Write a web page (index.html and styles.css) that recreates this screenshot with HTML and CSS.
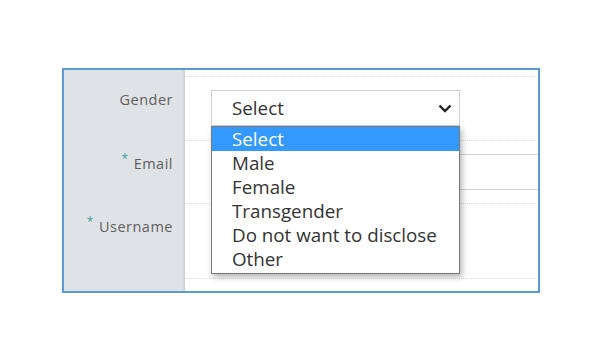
FILE: index.html
```html
<!DOCTYPE html>
<html lang="en">
<head>
    <meta charset="UTF-8">
    <title>Profile form</title>
    <link rel="stylesheet" href="styles.css">
</head>
<body>
    <div class="frame">
        <div class="label spacer"></div>
        <div class="field spacer-top"></div>

        <div class="label">Gender</div>
        <div class="field">
            <div class="select-wrap">
                <div class="select">
                    <span>Select</span>
                    <svg class="chevron" width="14" height="9" viewBox="0 0 14 9">
                        <path d="M1.5 1.5 L7 7 L12.5 1.5" fill="none" stroke="#222" stroke-width="2.4"/>
                    </svg>
                </div>
                <ul class="dropdown">
                    <li class="active">Select</li>
                    <li>Male</li>
                    <li>Female</li>
                    <li>Transgender</li>
                    <li>Do not want to disclose</li>
                    <li>Other</li>
                </ul>
            </div>
        </div>

        <div class="label"><span class="req">*</span>Email</div>
        <div class="field">
            <div class="input"></div>
        </div>

        <div class="label"><span class="req">*</span>Username</div>
        <div class="field"></div>

        <div class="label spacer"></div>
        <div class="field"></div>
    </div>
</body>
</html>
```

FILE: styles.css
```css
body {
    margin: 0;
    background: #fff;
    font-family: "Open Sans", "Noto Sans", sans-serif;
}
.frame {
    margin: 68px 0 0 62px;
    width: 478px;
    height: 225px;
    box-sizing: border-box;
    border: 2px solid #5b9bd5;
    display: grid;
    grid-template-columns: 121px 1fr;
    grid-template-rows: 6px 64px 63px 75px 1fr;
    overflow: hidden;
}
.label {
    background: #e0e3e5;
    box-shadow: inset -3px 0 3px -2px rgba(0, 0, 0, 0.12);
    text-align: right;
    padding: 14px 12px 0 0;
    font-size: 14.5px;
    letter-spacing: 0.5px;
    line-height: 20px;
    color: #5e5e5e;
}
.label.spacer {
    padding: 0;
}
.req {
    color: #3a9ea6;
    font-size: 12px;
    position: relative;
    top: -6px;
    margin-right: 5px;
}
.field {
    border-top: 1px dotted #dcdcdc;
    padding: 13px 0 0 26px;
    display: flex;
    align-items: flex-start;
}
.spacer-top {
    border-top: none;
    padding: 0;
}
.select-wrap {
    position: relative;
}
.select {
    width: 249px;
    height: 36px;
    box-sizing: border-box;
    border: 1px solid #cfcfcf;
    background: #fff;
    display: flex;
    align-items: center;
    justify-content: space-between;
    padding: 0 7px 0 20px;
    font-size: 18.8px;
    color: #333;
}
.dropdown {
    position: absolute;
    left: 0;
    top: 100%;
    width: 249px;
    box-sizing: border-box;
    margin: 0;
    padding: 0 0 2px;
    list-style: none;
    background: #fff;
    border: 1px solid #7a7a7a;
    box-shadow: 2px 3px 6px rgba(0, 0, 0, 0.3);
    font-size: 18.8px;
    color: #333;
    z-index: 2;
}
.dropdown li {
    height: 24px;
    line-height: 24px;
    padding-left: 20px;
}
.dropdown li.active {
    background: #3399ff;
    color: #fff;
}
.input {
    flex: 1;
    height: 36px;
    box-sizing: border-box;
    border: 1px solid #d4d4d4;
    margin-right: -4px;
}
```
